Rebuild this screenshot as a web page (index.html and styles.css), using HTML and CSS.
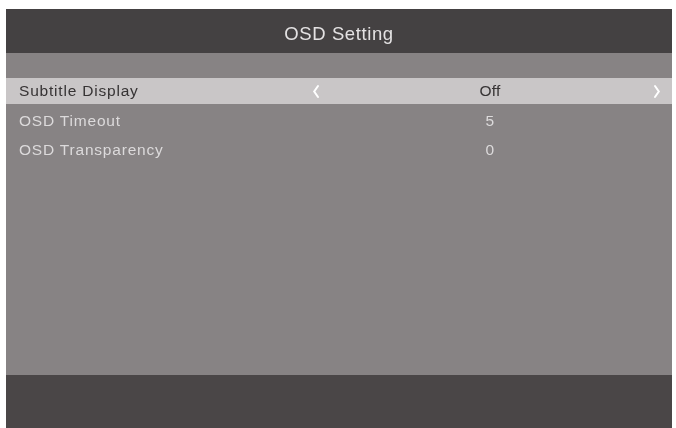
FILE: index.html
```html
<!DOCTYPE html>
<html>
<head>
<meta charset="utf-8">
<link rel="stylesheet" href="styles.css">
</head>
<body>
<div class="screen">
  <div class="header">OSD Setting</div>
  <div class="band"></div>
  <div class="list">
    <div class="row selected">
      <span class="label">Subtitle Display</span>
      <span class="chev"><svg width="8" height="15" viewBox="0 0 8 15"><path d="M6 2 L2.2 7.5 L6 13" fill="none" stroke="#ffffff" stroke-width="2" stroke-linecap="round"/></svg></span>
      <span class="value">Off</span>
      <span class="chev"><svg width="8" height="15" viewBox="0 0 8 15"><path d="M2 2 L5.8 7.5 L2 13" fill="none" stroke="#ffffff" stroke-width="2" stroke-linecap="round"/></svg></span>
    </div>
    <div class="row">
      <span class="label">OSD Timeout</span>
      <span class="chev"></span>
      <span class="value">5</span>
      <span class="chev"></span>
    </div>
    <div class="row">
      <span class="label">OSD Transparency</span>
      <span class="chev"></span>
      <span class="value">0</span>
      <span class="chev"></span>
    </div>
  </div>
  <div class="footer"></div>
</div>
</body>
</html>
```
FILE: styles.css
```css
html, body {
  margin: 0;
  padding: 0;
  background: #ffffff;
}
body {
  font-family: "Liberation Sans", Arial, sans-serif;
  width: 676px;
  height: 428px;
  overflow: hidden;
}
.screen {
  margin: 9px 0 0 6px;
  width: 666px;
  height: 419px;
  display: flex;
  flex-direction: column;
  background: #878384;
}
.header {
  height: 44px;
  box-sizing: border-box;
  padding-top: 5px;
  background: #444142;
  color: #e4e2e3;
  font-size: 18.5px;
  letter-spacing: 0.6px;
  display: flex;
  align-items: center;
  justify-content: center;
  filter: blur(0.4px);
}
.band {
  height: 25px;
}
.list {
  flex: 1;
  display: flex;
  flex-direction: column;
}
.row {
  display: grid;
  grid-template-columns: 290px 14px 328px 12px;
  align-items: center;
  height: 29px;
  padding-left: 13px;
  color: #dcdadb;
  font-size: 15.5px;
  letter-spacing: 0.8px;
}
.row.selected {
  height: 26px;
  background: #c9c6c7;
  color: #363334;
  margin-bottom: 2px;
}
.label, .value {
  filter: blur(0.35px);
  white-space: nowrap;
}
.value {
  text-align: center;
  padding-left: 6px;
  letter-spacing: 0.2px;
}
.chev {
  display: flex;
  justify-content: center;
  align-items: center;
  filter: blur(0.5px);
}
.footer {
  height: 53px;
  background: #4a4647;
}
```
